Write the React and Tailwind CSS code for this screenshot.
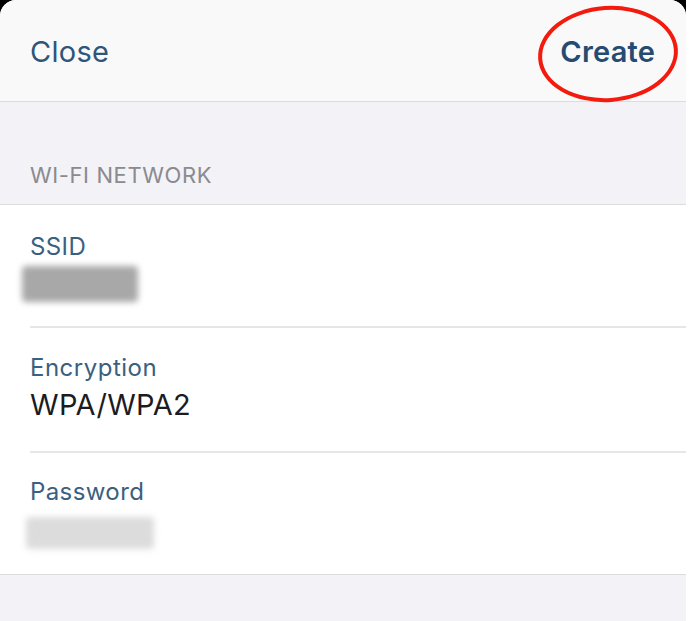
export default function App() {
  const font = { fontFamily: 'Inter, "Noto Sans", sans-serif' };
  return (
    <div className="w-[700px] h-[621px] bg-white overflow-hidden" style={font}>
      <div className="w-[686px] h-[621px] bg-black">
        <div className="h-full bg-[#f2f2f7] rounded-t-[16px] flex flex-col overflow-hidden">
          <div className="relative h-[102px] bg-[#f9f9fa] border-b border-[#dcdcdf] flex items-center justify-between pl-[30px] pr-[31px] pt-[2px]">
            <span className="text-[29px] text-[#2f5579] tracking-[0.3px]">Close</span>
            <span className="text-[29px] font-semibold text-[#264b70] tracking-[0.2px]">Create</span>
            <div className="absolute left-[538px] top-[6px] w-[140px] h-[96px] rounded-[50%] border-[4px] border-[#f21b0e] rotate-[-4deg]"></div>
          </div>
          <div className="h-[102px] flex items-end pl-[30px] pb-[12px]">
            <span className="text-[22px] text-[#8a8a8f] tracking-[0.6px]">WI-FI NETWORK</span>
          </div>
          <div className="bg-white border-t border-b border-[#dcdcdf] pl-[30px]">
            <div className="h-[123px] border-b-2 border-[#e6e6e8] pt-[26px] relative">
              <div className="text-[24px] text-[#39607f] leading-[32px] tracking-[0.4px]">SSID</div>
              <div className="mt-[3px] -ml-[8px] w-[116px] h-[36px] bg-[#a8a8a8] blur-[3px] rounded-sm"></div>
            </div>
            <div className="h-[125px] border-b-2 border-[#e6e6e8] pt-[24px]">
              <div className="text-[24px] text-[#39607f] leading-[32px] tracking-[0.5px]">Encryption</div>
              <div className="text-[29px] text-[#1c1c1e] leading-[40px] mt-[1px] tracking-[0.3px]">WPA/WPA2</div>
            </div>
            <div className="h-[121px] pt-[23px]">
              <div className="text-[24px] text-[#39607f] leading-[32px] tracking-[0.4px]">Password</div>
              <div className="mt-[9px] -ml-[4px] w-[128px] h-[32px] bg-[#dcdcdc] blur-[3px] rounded-sm"></div>
            </div>
          </div>
        </div>
      </div>
    </div>
  );
}
